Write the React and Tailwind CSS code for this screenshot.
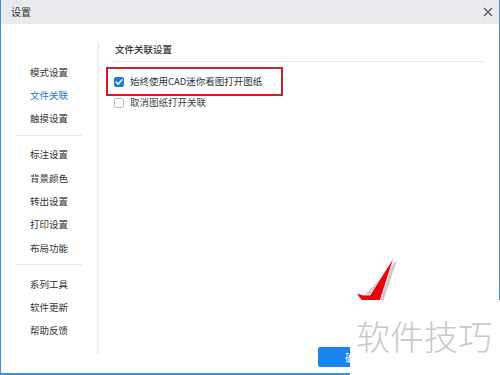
import React from 'react';

const MENU_GROUPS = [
  ['模式设置', '文件关联', '触摸设置'],
  ['标注设置', '背景颜色', '转出设置', '打印设置', '布局功能'],
  ['系列工具', '软件更新', '帮助反馈'],
];

const Checkbox = ({ checked }) =>
  checked ? (
    <span className="w-[10px] h-[10px] rounded-[2px] bg-[#1f7ae0] flex items-center justify-center shrink-0">
      <svg width="8" height="8" viewBox="0 0 8 8">
        <path d="M1.2 4.2 L3.2 6.1 L6.9 1.9" fill="none" stroke="#fff" strokeWidth="1.5" strokeLinecap="round" strokeLinejoin="round" />
      </svg>
    </span>
  ) : (
    <span className="w-[10px] h-[10px] rounded-[2px] border border-[#bdbdbd] bg-white shrink-0" />
  );

const App = () => {
  return (
    <div className="w-[500px] h-[375px] relative overflow-hidden bg-white font-['Noto_Sans_CJK_SC','Microsoft_YaHei',sans-serif]">
      {/* Dialog window */}
      <div className="h-[375px] flex flex-col border-x border-b-2 border-[#3d8fd8]">
        {/* Title bar */}
        <div className="h-[24px] shrink-0 bg-[#e7e9ec] flex items-center justify-between pl-[10px] pr-[6px]">
          <span className="text-[10px] leading-none text-[#333]">设置</span>
          <svg width="10" height="10" viewBox="0 0 10 10">
            <path d="M1 1 L9 9 M9 1 L1 9" stroke="#555" strokeWidth="1.1" />
          </svg>
        </div>

        <div className="flex-1 flex min-h-0">
          {/* Sidebar */}
          <div className="w-[98px] shrink-0 py-[19px]">
            <div className="h-full border-r-2 border-[#efefef] pt-[17px]">
              {MENU_GROUPS.map((group, gi) => (
                <div key={gi}>
                  {gi > 0 && <div className="mx-[15px] h-px bg-[#e6e6e6] mt-[5px] mb-[7px]" />}
                  {group.map((item) => (
                    <div
                      key={item}
                      className={`h-[23.3px] flex items-center justify-center text-[9.5px] ${
                        item === '文件关联' ? 'text-[#2377d4]' : 'text-[#333]'
                      }`}
                    >
                      {item}
                    </div>
                  ))}
                </div>
              ))}
            </div>
          </div>

          {/* Content */}
          <div className="flex-1 flex flex-col pl-[14px] pr-[14px] pt-[18px]">
            <div className="ml-[2px] h-[14px] flex items-center text-[9.5px] font-medium text-[#333]">文件关联设置</div>
            <div className="mt-[5px] h-px bg-[#e8e8e8]" />

            <div className="mt-[9px] ml-px h-[21px] flex items-center gap-[6px] text-[9.5px] text-[#333]">
              <Checkbox checked />
              <span>始终使用CAD迷你看图打开图纸</span>
            </div>
            <div className="ml-px h-[21px] flex items-center gap-[6px] text-[9.5px] text-[#444]">
              <Checkbox />
              <span>取消图纸打开关联</span>
            </div>

            {/* Footer button */}
            <div className="mt-auto mb-[6px] flex pl-[205px]">
              <button className="w-[74px] h-[20px] rounded-[2px] bg-[#1a85f0] text-white text-[10px] flex items-center justify-center">确定</button>
            </div>
          </div>
        </div>
      </div>

      {/* Red annotation frame */}
      <div className="absolute left-[106px] top-[67px] w-[177px] h-[29px] border-2 border-[#c8232b]" />

      {/* Red arrow annotation */}
      <svg className="absolute left-[350px] top-[250px]" width="50" height="52" viewBox="0 0 50 52">
        <polygon points="47,10 33,52 24,52 14,46" fill="#7a7a7a" opacity="0.4" />
        <polygon points="44,7 30,51 12,51 6,43 13,45 20,45" fill="#e8000b" stroke="#fff" strokeWidth="0.8" />
      </svg>

      {/* Watermark */}
      <div className="absolute left-[350px] top-[300px] w-[150px] h-[75px] bg-white flex items-start pt-[14px] pl-[6px]">
        <span className="text-[34px] leading-[44px] font-light text-[#c8c8c8]">软件技巧</span>
      </div>
    </div>
  );
};

export default App;
